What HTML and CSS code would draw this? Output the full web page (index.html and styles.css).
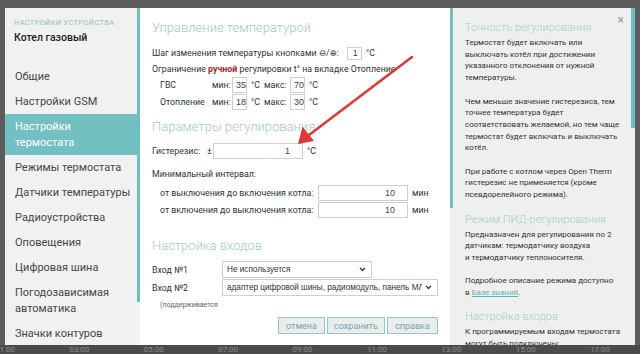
FILE: index.html
```html
<!DOCTYPE html>
<html lang="ru">
<head>
<meta charset="utf-8">
<title>Настройки термостата</title>
<link rel="stylesheet" href="styles.css">
</head>
<body>
<div class="page">
  <div class="page-fill"></div>
  <div class="timeline">
    <span>01:00</span><span>03:00</span><span>05:00</span><span>07:00</span><span>09:00</span><span>11:00</span><span>13:00</span><span>15:00</span><span>17:00</span>
  </div>
</div>

<div class="modal">
  <aside class="side">
    <div class="side-body">
      <div class="side-cap">НАСТРОЙКИ УСТРОЙСТВА</div>
      <div class="side-dev">Котел газовый</div>
      <ul class="menu">
        <li>Общие</li>
        <li>Настройки GSM</li>
        <li class="active">Настройки<br>термостата</li>
        <li>Режимы термостата</li>
        <li>Датчики температуры</li>
        <li>Радиоустройства</li>
        <li>Оповещения</li>
        <li>Цифровая шина</li>
        <li>Погодозависимая<br>автоматика</li>
        <li>Значки контуров</li>
      </ul>
    </div>
    <div class="track"><div class="thumb thumb-side"></div></div>
  </aside>

  <main class="main">
    <div class="main-body">
      <h2 class="h2 h2-first">Управление температурой</h2>
      <div class="row row-step">
        <span>Шаг изменения температуры кнопками <span class="sym">⊖</span>/<span class="sym">⊕</span>:</span>
        <input class="inp inp-step" value="1">
        <span>°C</span>
      </div>
      <div class="row row-limit">Ограничение&nbsp;<b class="red">ручной</b>&nbsp;регулировки t° на вкладке Отопление</div>
      <div class="row row-mm">
        <span class="mm-label">ГВС</span>
        <span class="mm-min">мин:</span><input class="inp inp-small" value="35"><span class="unit">°C</span>
        <span class="mm-max">макс:</span><input class="inp inp-small" value="70"><span class="unit">°C</span>
      </div>
      <div class="row row-mm">
        <span class="mm-label">Отопление</span>
        <span class="mm-min">мин:</span><input class="inp inp-small" value="18"><span class="unit">°C</span>
        <span class="mm-max">макс:</span><input class="inp inp-small" value="30"><span class="unit">°C</span>
      </div>

      <h2 class="h2 h2-second">Параметры регулирования</h2>
      <div class="row row-hyst">
        <span class="hyst-label">Гистерезис:</span>
        <span class="pm">±</span>
        <input class="inp inp-wide" value="1">
        <span class="unit">°C</span>
      </div>
      <div class="row row-interval">Минимальный интервал:</div>
      <div class="row row-int first-int">
        <span class="int-label">от выключения до включения котла:</span>
        <input class="inp inp-wide" value="10">
        <span class="unit">мин</span>
      </div>
      <div class="row row-int">
        <span class="int-label">от включения до выключения котла:</span>
        <input class="inp inp-wide" value="10">
        <span class="unit">мин</span>
      </div>

      <h2 class="h2 h2-third">Настройка входов</h2>
      <div class="row row-in first-in">
        <span class="in-label">Вход №1</span>
        <div class="select sel-1"><span class="sel-text">Не используется</span><svg class="chev" viewBox="0 0 8 6" width="7" height="5"><path d="M1 1 L4 4.2 L7 1" fill="none" stroke="#333" stroke-width="1.6"/></svg></div>
      </div>
      <div class="row row-in">
        <span class="in-label">Вход №2</span>
        <div class="select sel-2"><span class="sel-text">адаптер цифровой шины, радиомодуль, панель МЛ-432</span><svg class="chev" viewBox="0 0 8 6" width="7" height="5"><path d="M1 1 L4 4.2 L7 1" fill="none" stroke="#333" stroke-width="1.6"/></svg></div>
      </div>
      <div class="note">(поддерживается</div>
      <div class="buttons">
        <button class="btn btn-cancel">отмена</button>
        <button class="btn btn-save">сохранить</button>
        <button class="btn btn-help">справка</button>
      </div>
    </div>
    <div class="track track-main"><div class="thumb thumb-main"></div></div>
  </main>

  <section class="help">
    <div class="help-body">
      <span class="close">×</span>
      <h3 class="h3">Точность регулирования</h3>
      <p>Термостат будет включать или<br>выключать котёл при достижении<br>указанного отклонения от нужной<br>температуры.</p>
      <p>Чем меньше значение гистерезиса, тем<br>точнее температура будет<br>соответствовать желаемой, но тем чаще<br>термостат будет включать и выключать<br>котёл.</p>
      <p>При работе с котлом через Open Therm<br>гистерезис не применяется (кроме<br>псевдорелейного режима).</p>
      <h3 class="h3">Режим ПИД-регулирования</h3>
      <p>Предназначен для регулирования по 2<br>датчикам: термодатчику воздуха<br>и термодатчику теплоносителя.</p>
      <p>Подробное описание режима доступно<br>в <a class="kb" href="#">Базе знаний</a>.</p>
      <h3 class="h3">Настройка входов</h3>
      <p>К программируемым входам термостата<br>могут быть подключены:</p>
    </div>
    <div class="track track-help"><div class="thumb thumb-help"></div></div>
  </section>
</div>

<svg class="arrow" width="640" height="354" viewBox="0 0 640 354">
  <line x1="412" y1="57" x2="309" y2="135" stroke="#dd3a34" stroke-width="2.6" stroke-linecap="round"/>
  <polygon points="298,144 302.5,126.5 314,141" fill="#dd3a34"/>
</svg>
</body>
</html>
```

FILE: styles.css
```css
* { box-sizing: border-box; }

html, body {
  margin: 0;
  padding: 0;
}

body {
  width: 640px;
  height: 354px;
  overflow: hidden;
  position: relative;
  background: #5c5c5c;
  font-family: Roboto, "Noto Sans", "DejaVu Sans", sans-serif;
  color: #333;
}

/* dimmed page underneath */
.page {
  height: 354px;
  display: flex;
  flex-direction: column;
}
.page-fill { flex: 1; }
.timeline {
  height: 9px;
  background: #4b4b4b;
  display: flex;
  margin-left: -5px;
  font-size: 8px;
  line-height: 10px;
  color: #8c8c8c;
}
.timeline span {
  flex: 0 0 74.4px;
}

/* modal */
.modal {
  position: absolute;
  left: 5px;
  top: 8px;
  width: 630px;
  height: 337px;
  display: flex;
  overflow: hidden;
}

.track {
  flex: 0 0 3px;
  background: #f1f1f1;
}
.thumb { background: #6fbec0; }
.thumb-side { height: 294px; }
.thumb-main { height: 200px; }
.thumb-help { height: 120px; }

/* sidebar */
.side {
  flex: 0 0 135px;
  display: flex;
}
.side-body {
  flex: 1;
  background: #f1f1f1;
  padding-top: 10px;
  overflow: hidden;
}
.side-cap {
  font-size: 7.4px;
  line-height: 10px;
  letter-spacing: 0.35px;
  color: #93bcc0;
  padding-left: 9px;
}
.side-dev {
  margin-top: 3px;
  font-size: 10.5px;
  line-height: 14px;
  font-weight: 500;
  color: #222;
  padding-left: 9px;
}
.menu {
  list-style: none;
  margin: 19px 0 0;
  padding: 0;
}
.menu li {
  font-size: 11px;
  line-height: 16px;
  padding: 4.5px 6px 4.5px 10px;
  color: #474747;
  white-space: nowrap;
}
.menu li.active {
  background: #72c0c2;
  color: #fff;
}

/* main panel */
.main {
  flex: 0 0 313px;
  display: flex;
}
.main-body {
  flex: 1;
  background: #fff;
  padding: 10px 8px 0 12px;
  overflow: hidden;
  font-size: 8.8px;
}
.h2 {
  margin: 0;
  font-size: 13px;
  line-height: 20px;
  font-weight: 300;
  color: #9fc8cb;
  white-space: nowrap;
}
.h2-second { margin-top: 7px; }
.h2-third { margin-top: 18px; }

.row {
  display: flex;
  align-items: center;
  white-space: nowrap;
  color: #333;
}
.row-step { margin-top: 7px; height: 16px; }
.row-limit { height: 15px; }
.red { color: #a7262a; font-weight: 700; }
.sym { font-family: "DejaVu Sans", sans-serif; font-size: 8.6px; }

.inp {
  font-family: "Liberation Sans", Arial, sans-serif;
  font-size: 9px;
  color: #444;
  border: 1px solid #cfcfcf;
  background: #fff;
  outline: none;
  margin: 0;
}
.inp-step {
  width: 15px;
  height: 13px;
  padding: 0 3px 0 0;
  text-align: right;
  margin: 0 4px 0 8px;
}
.row-mm { height: 17px; padding-left: 8px; }
.mm-label { width: 52px; }
.mm-min { width: 20px; }
.mm-max { width: 26px; margin-left: 4px; }
.inp-small {
  width: 15px;
  height: 16px;
  padding: 0 0 0 3px;
}
.unit { margin-left: 4px; }

.row-hyst { margin-top: 5px; height: 17px; }
.hyst-label { width: 55px; }
.pm { width: 6px; }
.inp-wide {
  width: 90px;
  height: 16px;
  padding: 0 12px 0 0;
  text-align: right;
}
.row-interval { margin-top: 8px; height: 14px; }
.row-int { height: 17px; padding-left: 8px; }
.first-int { margin-top: 3px; }
.int-label { width: 158px; }

.row-in { height: 17px; }
.first-in { margin-top: 5px; }
.row-in + .row-in { margin-top: 1px; }
.in-label { width: 70px; }
.select {
  height: 17px;
  border: 1px solid #cfcfcf;
  background: #fff;
  display: flex;
  align-items: center;
  padding: 0 5px 0 4px;
  font-family: "Liberation Sans", Arial, sans-serif;
  font-size: 8.2px;
  color: #333;
  overflow: hidden;
}
.sel-1 { width: 150px; }
.sel-2 { width: 216px; }
.sel-text { flex: 1; overflow: hidden; white-space: nowrap; }
.chev { flex: 0 0 auto; margin-left: 3px; }

.note {
  margin-top: 4px;
  padding-left: 8px;
  font-size: 7px;
  line-height: 10px;
  color: #666;
}

.buttons {
  margin-top: 7px;
  display: flex;
  justify-content: flex-end;
  gap: 2px;
  padding-right: 4px;
}
.btn {
  height: 17px;
  padding: 0;
  border: 1px solid #8fc9cc;
  background: #ececec;
  color: #74a7aa;
  font-family: Roboto, sans-serif;
  font-size: 9px;
}
.btn-cancel { width: 47px; }
.btn-save { width: 58px; }
.btn-help { width: 51px; }

/* help panel */
.help {
  flex: 0 0 182px;
  display: flex;
}
.help-body {
  flex: 1;
  background: #efefef;
  padding: 13px 6px 0 12px;
  overflow: hidden;
  position: relative;
  font-size: 8px;
  line-height: 11.7px;
  color: #333;
}
.close {
  position: absolute;
  right: 7px;
  top: 6px;
  font-size: 12px;
  line-height: 12px;
  color: #999;
}
.h3 {
  margin: 0 0 2px;
  font-size: 11px;
  line-height: 14px;
  font-weight: 300;
  color: #a5ccd0;
  white-space: nowrap;
}
.help-body p {
  margin: 0 0 11.7px;
  white-space: nowrap;
}
.kb {
  color: #5fb3b8;
  text-decoration: underline;
}
.track-help { flex: 0 0 4px; background: #efefef; }

/* annotation arrow */
.arrow {
  position: absolute;
  left: 0;
  top: 0;
  pointer-events: none;
}
```
